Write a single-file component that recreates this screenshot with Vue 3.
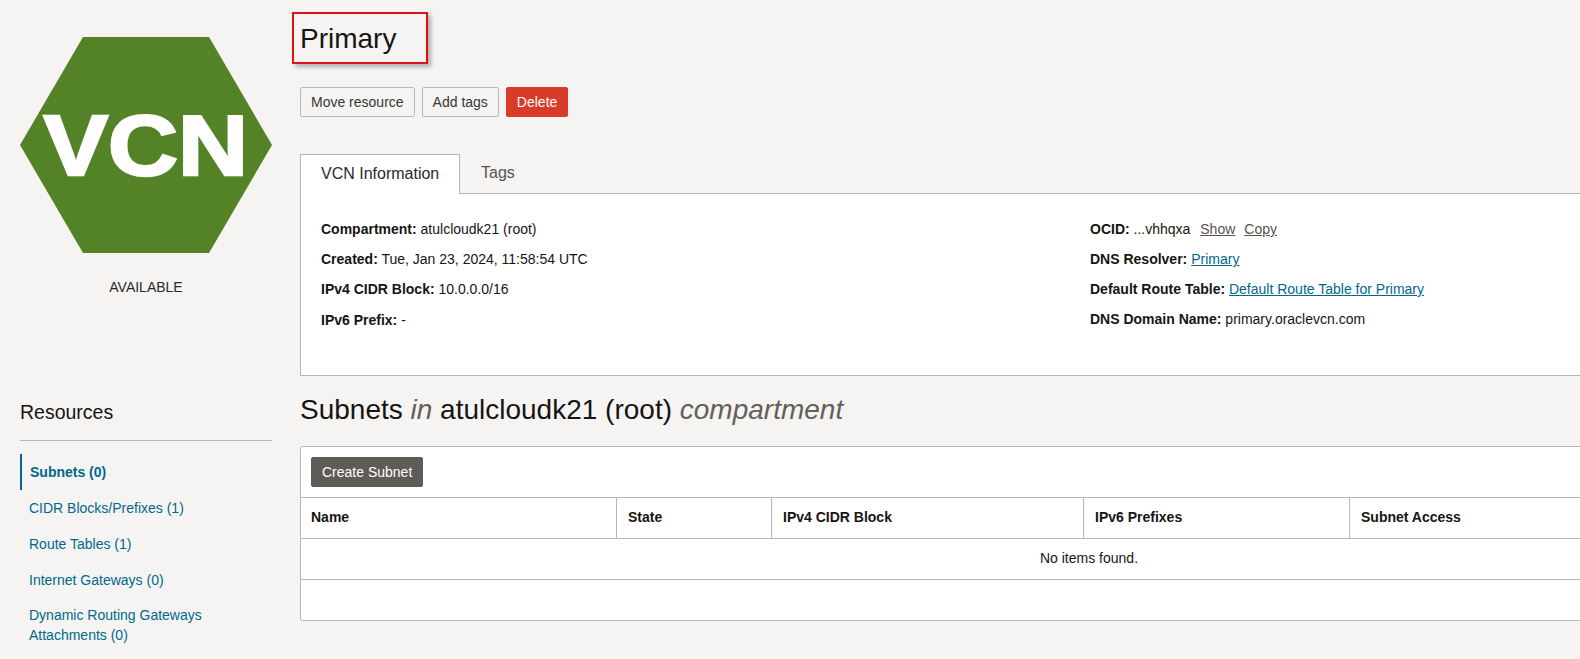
<script setup>
const leftInfo = [
  { label: 'Compartment:', value: 'atulcloudk21 (root)' },
  { label: 'Created:', value: 'Tue, Jan 23, 2024, 11:58:54 UTC' },
  { label: 'IPv4 CIDR Block:', value: '10.0.0.0/16' },
  { label: 'IPv6 Prefix:', value: '-' },
]
const columns = ['Name', 'State', 'IPv4 CIDR Block', 'IPv6 Prefixes', 'Subnet Access']
const resources = [
  { text: 'Subnets (0)', active: true },
  { text: 'CIDR Blocks/Prefixes (1)' },
  { text: 'Route Tables (1)' },
  { text: 'Internet Gateways (0)' },
  { text: 'Dynamic Routing Gateways Attachments (0)' },
]
</script>

<template>
  <div class="page">
    <aside class="side">
      <div class="hex"><span>VCN</span></div>
      <div class="status">AVAILABLE</div>
      <h2 class="res-title">Resources</h2>
      <ul class="res-list">
        <li v-for="r in resources" :key="r.text" :class="{ active: r.active }">{{ r.text }}</li>
      </ul>
    </aside>

    <main class="main">
      <header class="title-wrap">
        <h1 class="title">Primary</h1>
        <div class="callout"></div>
      </header>

      <div class="actions">
        <button class="btn">Move resource</button>
        <button class="btn">Add tags</button>
        <button class="btn danger">Delete</button>
      </div>

      <div class="tabs">
        <div class="tab on">VCN Information</div>
        <div class="tab">Tags</div>
      </div>
      <section class="panel">
        <div class="info-col">
          <p v-for="i in leftInfo" :key="i.label"><b>{{ i.label }}</b> {{ i.value }}</p>
        </div>
        <div class="info-col">
          <p><b>OCID:</b> ...vhhqxa <a class="plain">Show</a><a class="plain">Copy</a></p>
          <p><b>DNS Resolver:</b> <a class="link">Primary</a></p>
          <p><b>Default Route Table:</b> <a class="link">Default Route Table for Primary</a></p>
          <p><b>DNS Domain Name:</b> primary.oraclevcn.com</p>
        </div>
      </section>

      <h2 class="subnets">Subnets <i>in</i> atulcloudk21 (root) <i>compartment</i></h2>

      <section class="card">
        <div class="toolbar"><button class="btn dark">Create Subnet</button></div>
        <div class="thead">
          <div v-for="c in columns" :key="c" class="th">{{ c }}</div>
        </div>
        <div class="empty">No items found.</div>
        <div class="foot"></div>
      </section>
    </main>
  </div>
</template>

<style>
html, body { margin: 0; overflow: hidden; background: #f5f4f2; }
</style>

<style scoped>
.page {
  display: flex;
  gap: 28px;
  width: 1580px;
  height: 659px;
  overflow: hidden;
  padding-left: 20px;
  box-sizing: border-box;
  background: #f5f4f2;
  color: #161513;
  font-family: "Liberation Sans", Arial, sans-serif;
  font-size: 14px;
}
.side { flex: 0 0 252px; width: 252px; padding-top: 37px; }
.hex {
  width: 252px;
  height: 216px;
  background: #548226;
  clip-path: polygon(25% 0, 75% 0, 100% 50%, 75% 100%, 25% 100%, 0 50%);
  display: flex;
  align-items: center;
  justify-content: center;
}
.hex span {
  color: #fff;
  font-weight: 700;
  font-size: 85px;
  line-height: 1;
  -webkit-text-stroke: 2.5px #fff;
  transform: scaleX(1.14);
}
.status { text-align: center; font-size: 14px; margin-top: 26px; line-height: 16px; color: #2c2a28; }
.res-title { font-size: 19.5px; font-weight: 400; margin: 104px 0 0; line-height: 26px; }
.res-list {
  list-style: none;
  margin: 15px 0 0;
  padding: 13px 0 0;
  border-top: 1px solid #b9b7b4;
}
.res-list li {
  color: #00688c;
  font-size: 14px;
  line-height: 20px;
  padding: 8px 60px 8px 9px;
}
.res-list li:last-child { margin-top: -1px; }
.res-list li.active {
  font-weight: 700;
  border-left: 2px solid #00688c;
  padding-left: 8px;
  color: #00688c;
}
.main { flex: 0 0 1578px; width: 1578px; }
.title-wrap { position: relative; padding-top: 21px; height: 67px; box-sizing: border-box; }
.title { font-size: 28px; font-weight: 400; line-height: 36px; margin: 0; }
.callout {
  position: absolute;
  left: -8px;
  top: 12px;
  width: 136px;
  height: 52px;
  box-sizing: border-box;
  border: 2px solid #e0101a;
  box-shadow: 3px 3px 4px rgba(0, 0, 0, .28);
}
.actions { display: flex; gap: 7px; margin-top: 20px; }
.btn {
  height: 30px;
  padding: 0 10px;
  border: 1px solid #bdbab6;
  border-radius: 2px;
  background: #f5f4f2;
  color: #3a3733;
  font: 14px "Liberation Sans", Arial, sans-serif;
}
.danger { background: #d83b27; border-color: #d83b27; color: #fff; }
.dark { background: #5f5b56; border-color: #5f5b56; color: #fff; }
.tabs { display: flex; margin-top: 37px; height: 39px; position: relative; z-index: 1; }
.tab { font-size: 16px; line-height: 38px; padding: 0 21px; color: #55524e; white-space: nowrap; }
.tab.on {
  width: 160px;
  box-sizing: border-box;
  height: 40px;
  background: #fff;
  border: 1px solid #b9b7b4;
  border-bottom: 0;
  color: #2c2a28;
  padding: 0 20px;
}
.panel {
  height: 183px;
  box-sizing: border-box;
  background: #fff;
  border: 1px solid #b9b7b4;
  display: grid;
  grid-template-columns: 769px 1fr;
  padding: 20px 20px 0;
}
.info-col p { margin: 0; line-height: 30px; font-size: 14px; white-space: nowrap; }
.info-col:first-child p:last-child { margin-top: 1px; }
.info-col b { font-weight: 700; }
.plain { color: #55524e; text-decoration: underline; margin-left: 6px; }
.plain + .plain { margin-left: 9px; }
.link { color: #00688c; text-decoration: underline; }
.subnets { font-size: 28px; font-weight: 400; line-height: 36px; margin: 16px 0 0; }
.subnets i { color: #63605c; }
.card {
  margin-top: 18px;
  background: #fff;
  border: 1px solid #b9b7b4;
  border-radius: 3px;
  box-sizing: border-box;
  height: 175px;
}
.toolbar { height: 51px; padding: 10px 10px 0; box-sizing: border-box; border-bottom: 1px solid #b9b7b4; }
.thead {
  display: grid;
  grid-template-columns: 315px 155px 312px 266px 1fr;
  height: 41px;
  box-sizing: border-box;
  border-bottom: 1px solid #b9b7b4;
}
.th {
  font-weight: 700;
  font-size: 14px;
  line-height: 38px;
  padding-left: 11px;
  border-left: 1px solid #b9b7b4;
}
.th:first-child { border-left: 0; padding-left: 10px; }
.empty {
  height: 41px;
  box-sizing: border-box;
  border-bottom: 1px solid #b9b7b4;
  line-height: 38px;
  text-align: center;
  font-size: 14px;
}
.foot { height: 40px; }
</style>
